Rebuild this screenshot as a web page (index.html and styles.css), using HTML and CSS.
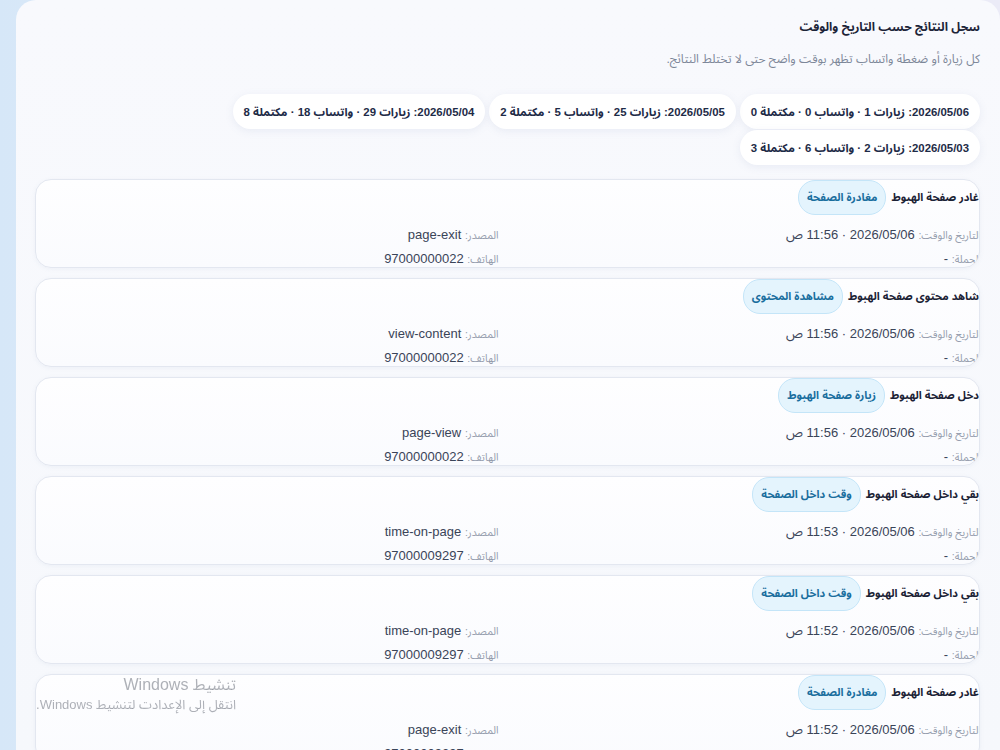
FILE: index.html
```html
<!DOCTYPE html>
<html lang="ar" dir="rtl">
<head>
<meta charset="utf-8">
<title>سجل النتائج</title>
<link rel="stylesheet" href="styles.css">
</head>
<body>
<main class="panel">
  <h2 class="panel-title">سجل النتائج حسب التاريخ والوقت</h2>
  <p class="panel-sub">كل زيارة أو ضغطة واتساب تظهر بوقت واضح حتى لا تختلط النتائج.</p>
  <div class="days">
    <span class="day">2026/05/06: زيارات 1 · واتساب 0 · مكتملة 0</span>
    <span class="day">2026/05/05: زيارات 25 · واتساب 5 · مكتملة 2</span>
    <span class="day">2026/05/04: زيارات 29 · واتساب 18 · مكتملة 8</span>
    <span class="day">2026/05/03: زيارات 2 · واتساب 6 · مكتملة 3</span>
  </div>
  <section class="events">
    <article class="event">
      <div class="event-head"><strong class="event-title">غادر صفحة الهبوط</strong><span class="tag">مغادرة الصفحة</span></div>
      <div class="event-grid">
        <div class="row"><span class="lbl">التاريخ والوقت:</span> <span class="val">2026/05/06 · 11:56 ص</span></div>
        <div class="row"><span class="lbl">المصدر:</span> <span class="val">page-exit</span></div>
        <div class="row"><span class="lbl">الحملة:</span> <span class="val">-</span></div>
        <div class="row"><span class="lbl">الهاتف:</span> <span class="val">97000000022</span></div>
      </div>
    </article>
    <article class="event">
      <div class="event-head"><strong class="event-title">شاهد محتوى صفحة الهبوط</strong><span class="tag">مشاهدة المحتوى</span></div>
      <div class="event-grid">
        <div class="row"><span class="lbl">التاريخ والوقت:</span> <span class="val">2026/05/06 · 11:56 ص</span></div>
        <div class="row"><span class="lbl">المصدر:</span> <span class="val">view-content</span></div>
        <div class="row"><span class="lbl">الحملة:</span> <span class="val">-</span></div>
        <div class="row"><span class="lbl">الهاتف:</span> <span class="val">97000000022</span></div>
      </div>
    </article>
    <article class="event">
      <div class="event-head"><strong class="event-title">دخل صفحة الهبوط</strong><span class="tag">زيارة صفحة الهبوط</span></div>
      <div class="event-grid">
        <div class="row"><span class="lbl">التاريخ والوقت:</span> <span class="val">2026/05/06 · 11:56 ص</span></div>
        <div class="row"><span class="lbl">المصدر:</span> <span class="val">page-view</span></div>
        <div class="row"><span class="lbl">الحملة:</span> <span class="val">-</span></div>
        <div class="row"><span class="lbl">الهاتف:</span> <span class="val">97000000022</span></div>
      </div>
    </article>
    <article class="event">
      <div class="event-head"><strong class="event-title">بقي داخل صفحة الهبوط</strong><span class="tag">وقت داخل الصفحة</span></div>
      <div class="event-grid">
        <div class="row"><span class="lbl">التاريخ والوقت:</span> <span class="val">2026/05/06 · 11:53 ص</span></div>
        <div class="row"><span class="lbl">المصدر:</span> <span class="val">time-on-page</span></div>
        <div class="row"><span class="lbl">الحملة:</span> <span class="val">-</span></div>
        <div class="row"><span class="lbl">الهاتف:</span> <span class="val">97000009297</span></div>
      </div>
    </article>
    <article class="event">
      <div class="event-head"><strong class="event-title">بقي داخل صفحة الهبوط</strong><span class="tag">وقت داخل الصفحة</span></div>
      <div class="event-grid">
        <div class="row"><span class="lbl">التاريخ والوقت:</span> <span class="val">2026/05/06 · 11:52 ص</span></div>
        <div class="row"><span class="lbl">المصدر:</span> <span class="val">time-on-page</span></div>
        <div class="row"><span class="lbl">الحملة:</span> <span class="val">-</span></div>
        <div class="row"><span class="lbl">الهاتف:</span> <span class="val">97000009297</span></div>
      </div>
    </article>
    <article class="event">
      <div class="event-head"><strong class="event-title">غادر صفحة الهبوط</strong><span class="tag">مغادرة الصفحة</span></div>
      <div class="event-grid">
        <div class="row"><span class="lbl">التاريخ والوقت:</span> <span class="val">2026/05/06 · 11:52 ص</span></div>
        <div class="row"><span class="lbl">المصدر:</span> <span class="val">page-exit</span></div>
        <div class="row"><span class="lbl">الحملة:</span> <span class="val">-</span></div>
        <div class="row"><span class="lbl">الهاتف:</span> <span class="val">97000009297</span></div>
      </div>
    </article>
  </section>
</main>
<div class="watermark">
  <div class="wm-title">تنشيط Windows</div>
  <div class="wm-sub">انتقل إلى الإعدادت لتنشيط Windows.</div>
</div>
</body>
</html>
```
FILE: styles.css
```css
html, body {
  margin: 0;
  padding: 0;
  height: 100%;
  overflow: hidden;
}
body {
  font-family: "Liberation Sans", "Noto Sans Arabic", "DejaVu Sans", sans-serif;
  background: linear-gradient(90deg, #d6e7f8 0%, #e4ecf8 30%, #ebebf7 100%);
  color: #1f2a44;
  padding-left: 16px;
}
.panel {
  direction: rtl;
  background: linear-gradient(180deg, #f8f9fd 0%, #f6f8fc 100%);
  border-radius: 20px 20px 0 0;
  padding: 16px 20px 0 19px;
  min-height: 760px;
  box-sizing: border-box;
}
.panel-title {
  margin: 0;
  font-size: 12px;
  font-weight: 700;
  color: #1c2438;
  line-height: 22px;
}
.panel-sub {
  margin: 12px 0 0;
  font-size: 12px;
  color: #7d8799;
  line-height: 18px;
}
.days {
  display: flex;
  flex-wrap: wrap;
  gap: 1px 4px;
  margin-top: 26px;
}
.day {
  display: inline-flex;
  align-items: center;
  height: 35px;
  padding: 0 11px;
  background: #ffffff;
  border-radius: 18px;
  box-shadow: 0 2px 8px rgba(120, 140, 180, 0.12);
  font-size: 11.4px;
  font-weight: 700;
  color: #1e2b47;
}
.events {
  display: flex;
  flex-direction: column;
  gap: 10px;
  margin-top: 14px;
}
.event {
  height: 89px;
  box-sizing: border-box;
  overflow: hidden;
  background: linear-gradient(180deg, #fefeff 0%, #fafbfe 100%);
  border: 1px solid #e3e7f0;
  border-radius: 16px;
  box-shadow: 0 1px 4px rgba(120, 140, 180, 0.08);
}
.event-head {
  display: flex;
  align-items: center;
  gap: 5px;
  height: 34px;
}
.event-title {
  font-size: 11px;
  font-weight: 700;
  color: #1b2235;
}
.tag {
  display: inline-flex;
  align-items: center;
  height: 33px;
  padding: 0 8px;
  border-radius: 17px;
  background: #e4f4fd;
  border: 1px solid #c4e5f8;
  color: #1a6e9e;
  font-size: 11px;
  font-weight: 700;
}
.event-grid {
  display: grid;
  grid-template-columns: 1fr 1fr;
  column-gap: 20px;
  margin-top: 9px;
  margin-right: -2px;
}
.row {
  height: 24px;
  line-height: 24px;
  white-space: nowrap;
  font-size: 13px;
}
.lbl {
  font-size: 10.5px;
  color: #959dad;
}
.val {
  color: #3a4458;
}
.watermark {
  position: fixed;
  right: 764px;
  top: 674px;
  direction: rtl;
  text-align: right;
  white-space: nowrap;
  color: rgba(120, 125, 135, 0.6);
}
.wm-title {
  font-size: 16px;
  line-height: 22px;
}
.wm-sub {
  font-size: 13px;
  line-height: 18px;
}
```
